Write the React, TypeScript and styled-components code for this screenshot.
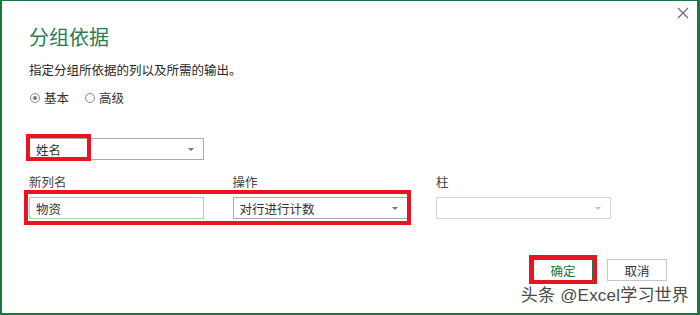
import React from "react";
import styled, { createGlobalStyle } from "styled-components";

const GlobalStyle = createGlobalStyle`
    html, body {
        margin: 0;
        padding: 0;
        background: #ffffff;
    }
    body {
        font-family: "Noto Sans CJK SC", "Liberation Sans", sans-serif;
        color: #262626;
    }
`;

const Dialog = styled.div`
    position: relative;
    box-sizing: border-box;
    width: 700px;
    height: 315px;
    border: 2px solid #217346;
    border-top-width: 1px;
    border-right-width: 3px;
    padding: 23px 30px 0 27px;
    background: #fff;
    font-size: 12.5px;
`;

const CloseButton = styled.button`
    position: absolute;
    top: 5px;
    right: 8px;
    width: 13px;
    height: 13px;
    padding: 0;
    border: none;
    background: transparent;
    display: flex;
    align-items: center;
    justify-content: center;
`;

const Title = styled.h1`
    margin: 0;
    font-size: 20px;
    line-height: 26px;
    font-weight: 400;
    color: #2b7a57;
`;

const Subtitle = styled.p`
    margin: 11px 0 0;
    line-height: 18px;
    color: #262626;
`;

const RadioRow = styled.div`
    margin-top: 10px;
    display: flex;
    align-items: center;
    gap: 16px;
    line-height: 18px;
    padding-left: 1px;
`;

const RadioLabel = styled.label`
    display: flex;
    align-items: center;
    gap: 4px;
    color: #333;
`;

const RadioDot = styled.span<{ $checked?: boolean }>`
    position: relative;
    box-sizing: border-box;
    width: 10px;
    height: 10px;
    border-radius: 50%;
    border: 1px solid #8a8a8a;
    &::after {
        content: "";
        display: ${(p) => (p.$checked ? "block" : "none")};
        position: absolute;
        left: 2px;
        top: 2px;
        width: 4px;
        height: 4px;
        border-radius: 50%;
        background: #777;
    }
`;

const Field = styled.div`
    position: relative;
    width: 175px;
`;

const GroupField = styled(Field)`
    margin-top: 31px;
`;

const Combo = styled.div<{ $disabled?: boolean }>`
    box-sizing: border-box;
    height: 22px;
    display: flex;
    align-items: center;
    justify-content: space-between;
    padding: 0 9px 0 6px;
    border: 1px solid ${(p) => (p.$disabled ? "#d2d2d2" : "#ababab")};
    background: #fff;
    color: #333;
`;

const Arrow = styled.span<{ $disabled?: boolean }>`
    width: 0;
    height: 0;
    border-left: 3px solid transparent;
    border-right: 3px solid transparent;
    border-top: 3px solid ${(p) => (p.$disabled ? "#c4c4c4" : "#777")};
`;

const TextInput = styled.div`
    box-sizing: border-box;
    height: 22px;
    display: flex;
    align-items: center;
    padding: 0 6px;
    border: 1px solid #a3d5b9;
    color: #333;
`;

const Grid = styled.div`
    position: relative;
    margin-top: 14px;
    display: grid;
    grid-template-columns: repeat(3, 175px);
    column-gap: 28.5px;
    row-gap: 7px;
`;

const FieldLabel = styled.div`
    line-height: 16px;
    color: #444;
`;

const Highlight = styled.div<{ $l: number; $t: number; $w: number; $h: number }>`
    position: absolute;
    box-sizing: border-box;
    left: ${(p) => p.$l}px;
    top: ${(p) => p.$t}px;
    width: ${(p) => p.$w}px;
    height: ${(p) => p.$h}px;
    border: 4px solid #e8141e;
    pointer-events: none;
`;

const Footer = styled.div`
    margin-top: 40px;
    display: flex;
    justify-content: flex-end;
    gap: 14px;
`;

const Button = styled.button<{ $primary?: boolean }>`
    position: relative;
    box-sizing: border-box;
    width: 60px;
    height: 22px;
    padding: 0;
    background: #fff;
    border: 1px solid ${(p) => (p.$primary ? "#217346" : "#c6c6c6")};
    color: ${(p) => (p.$primary ? "#217346" : "#333")};
    font-family: inherit;
    font-size: 12.5px;
`;

const Watermark = styled.div`
    position: absolute;
    right: 8px;
    bottom: 7px;
    font-family: "Liberation Sans", "Noto Sans CJK SC", sans-serif;
    font-size: 17px;
    line-height: 20px;
    color: #4a4a4a;
    text-shadow: 0 0 2px #fff, 0 0 2px #fff;
    letter-spacing: 0.2px;
`;

function App() {
    return (
        <>
            <GlobalStyle />
            <Dialog>
                <CloseButton aria-label="关闭">
                    <svg width="12" height="12" viewBox="0 0 12 12">
                        <path d="M1 1 L11 11 M11 1 L1 11" stroke="#6e6e6e" strokeWidth="1.3" fill="none" />
                    </svg>
                </CloseButton>
                <Title>分组依据</Title>
                <Subtitle>指定分组所依据的列以及所需的输出。</Subtitle>
                <RadioRow>
                    <RadioLabel>
                        <RadioDot $checked />
                        基本
                    </RadioLabel>
                    <RadioLabel>
                        <RadioDot />
                        高级
                    </RadioLabel>
                </RadioRow>
                <GroupField>
                    <Combo>
                        <span>姓名</span>
                        <Arrow />
                    </Combo>
                    <Highlight $l={-3} $t={-4} $w={65} $h={27} />
                </GroupField>
                <Grid>
                    <FieldLabel>新列名</FieldLabel>
                    <FieldLabel>操作</FieldLabel>
                    <FieldLabel>柱</FieldLabel>
                    <TextInput>物资</TextInput>
                    <Combo>
                        <span>对行进行计数</span>
                        <Arrow />
                    </Combo>
                    <Combo $disabled>
                        <span />
                        <Arrow $disabled />
                    </Combo>
                    <Highlight $l={-5} $t={16} $w={387} $h={35} />
                </Grid>
                <Footer>
                    <Button $primary>
                        确定
                        <Highlight $l={-5} $t={-5} $w={68} $h={29} />
                    </Button>
                    <Button>取消</Button>
                </Footer>
                <Watermark>头条 @Excel学习世界</Watermark>
            </Dialog>
        </>
    );
}

export default App;
